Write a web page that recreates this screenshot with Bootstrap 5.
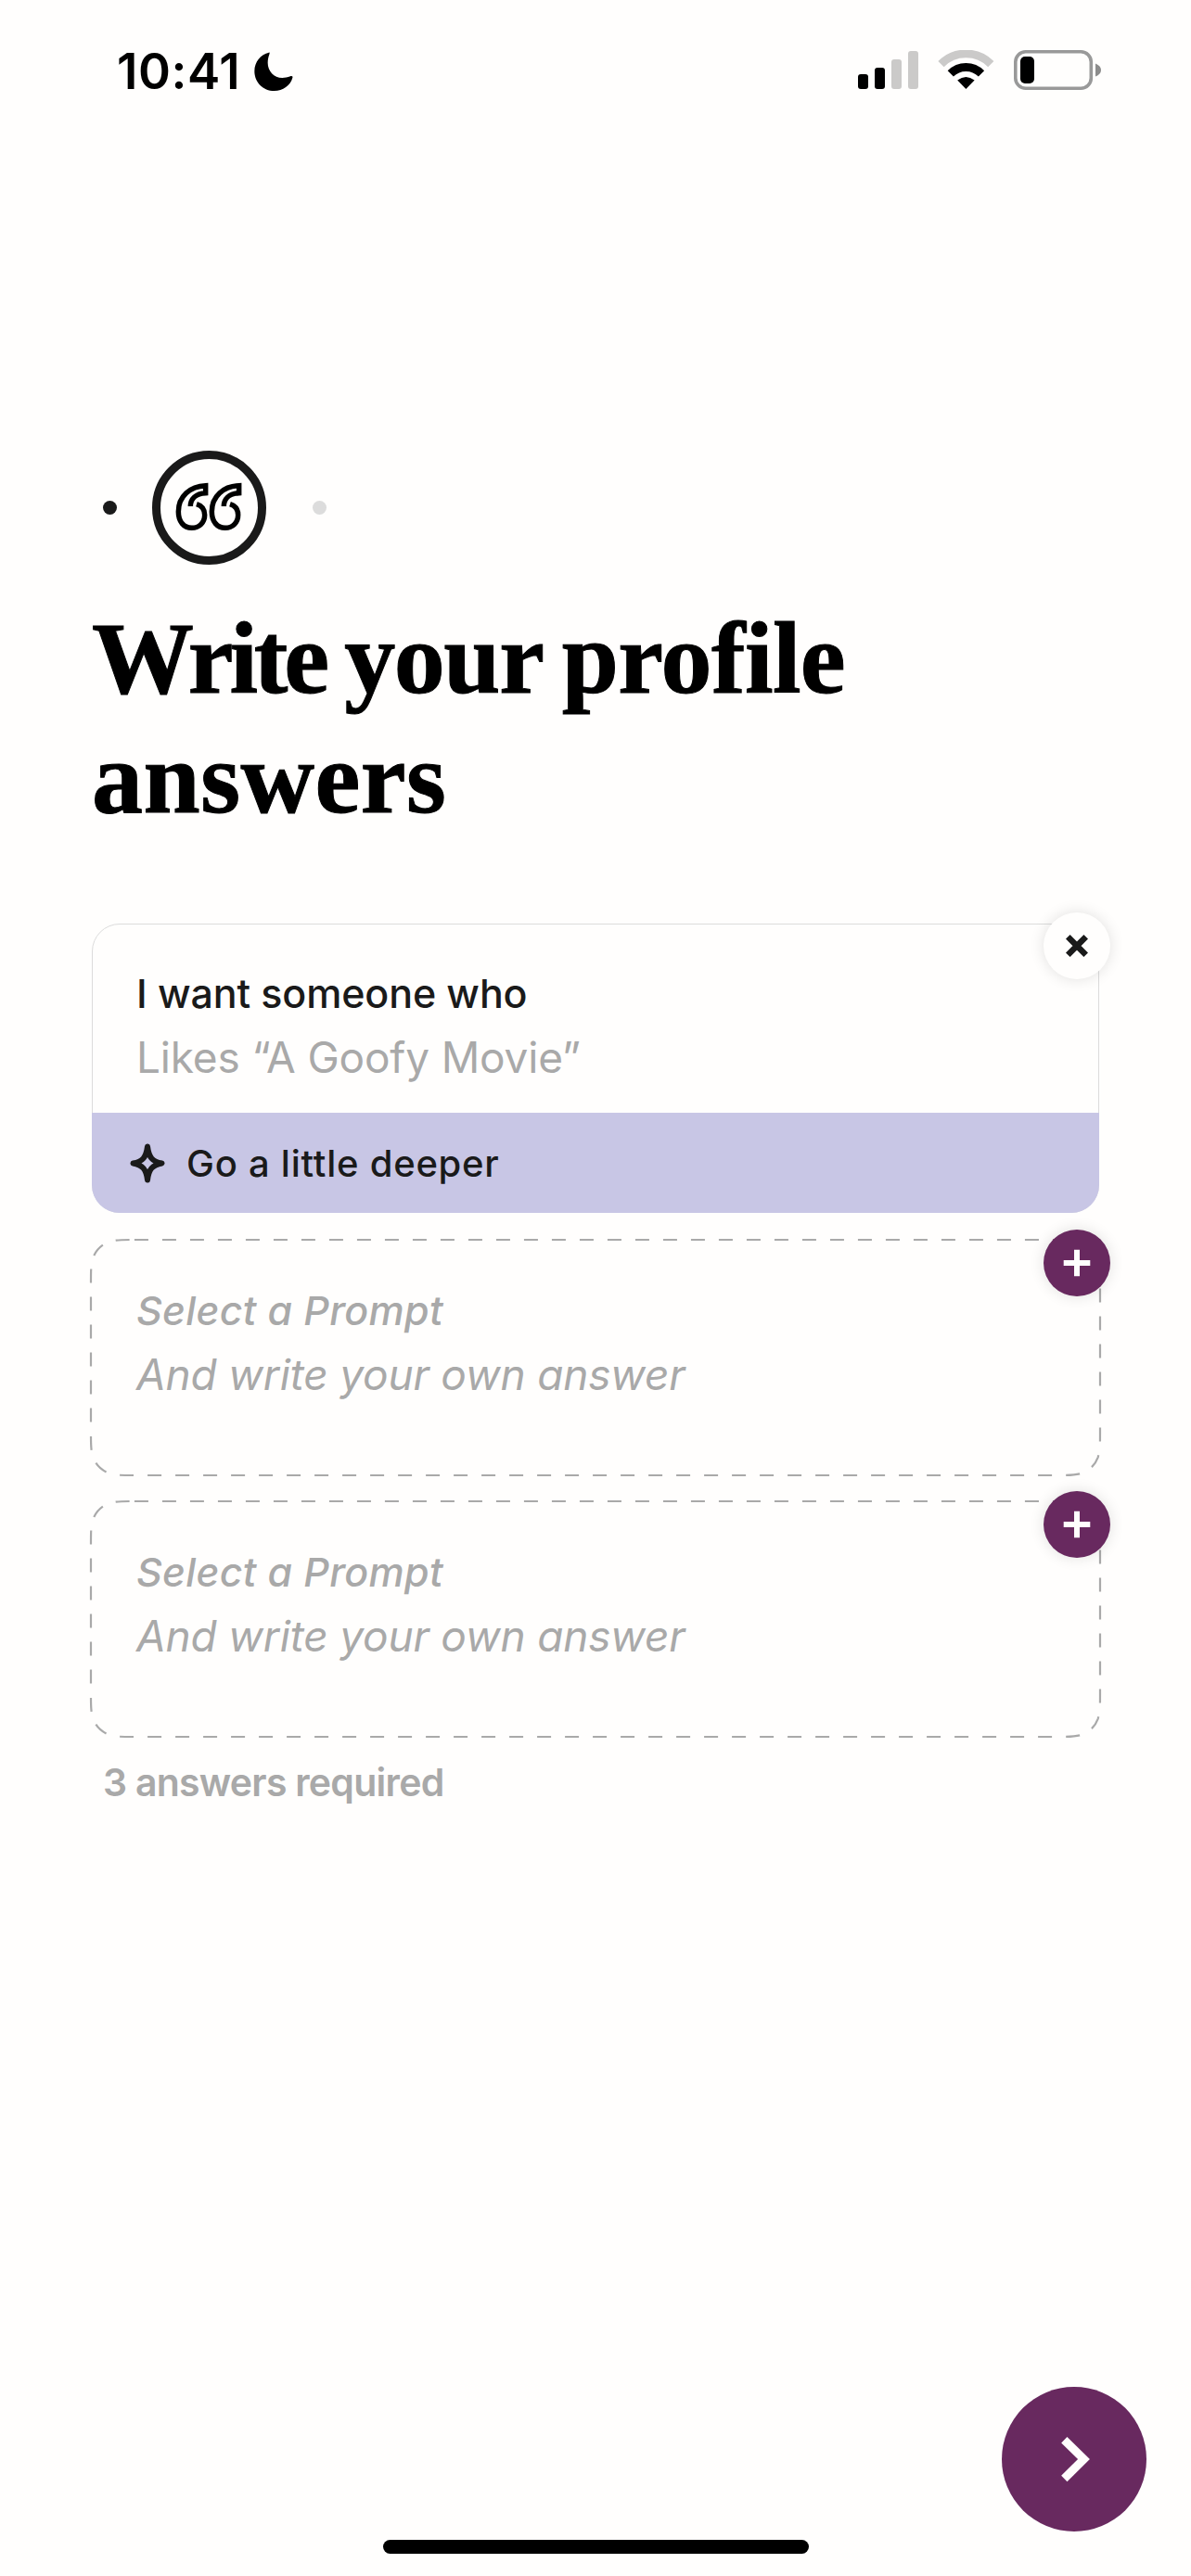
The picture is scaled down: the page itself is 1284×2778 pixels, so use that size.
<!DOCTYPE html>
<html lang="en">
<head>
<meta charset="utf-8">
<meta name="viewport" content="width=device-width, initial-scale=1">
<title>Write your profile answers</title>
<link href="https://cdn.jsdelivr.net/npm/bootstrap@5.3.0/dist/css/bootstrap.min.css" rel="stylesheet">
<style>
  :root { --plum: #68295f; --ink: #1a1a1a; --mute: #a9a9a9; --paper: #fffefd; }
  body { background: var(--paper); color: var(--ink); font-family: Inter, "Liberation Sans", sans-serif; }
  .screen { width: 1284px; height: 2778px; overflow: hidden; }
  svg { display: block; flex: none; }
  .status-bar { height: 150px; padding: 54px 97px 0 126px; color: #000; }
  .clock { font-size: 53px; font-weight: 600; line-height: 46px; letter-spacing: .6px; white-space: nowrap; }
  .moon { margin: 2px 0 0 15px; }
  .steps { margin-top: 336px; height: 123px; padding-left: 12px; }
  .step-icon { margin: 0 50px 0 38px; }
  .dot { width: 15px; height: 15px; border-radius: 50%; background: var(--ink); }
  .dot-off { background: #dcdcdc; }
  .content { padding: 0 99px; }
  .headline { font: 700 110px/129px "Liberation Serif", serif; color: #000; letter-spacing: .5px; -webkit-text-stroke: 1px #000; margin: 37px 0 0 0; white-space: nowrap; }
  .h-a { letter-spacing: -4.2px; word-spacing: -3px; }
  .h-b { letter-spacing: -1.4px; word-spacing: -4px; }
  .h-c { letter-spacing: -.6px; }
  .prompt { height: 312px; border: 1px solid #dcdcdc; border-radius: 30px; background: transparent; margin-top: 92px; }
  .prompt-body { height: 203px; padding: 40px 0 0 47px; }
  .prompt-foot { height: 108px; margin: 0 -1px -1px; padding: 0 0 0 41px; background: #c8c6e5; border-radius: 0 0 30px 30px; }
  .q { font-size: 43px; line-height: 69px; font-weight: 500; letter-spacing: -.13px; white-space: nowrap; }
  .a { font-size: 46px; line-height: 69px; font-weight: 400; color: var(--mute); letter-spacing: -.17px; white-space: nowrap; }
  .foot-text { font-size: 40px; font-weight: 500; letter-spacing: .75px; line-height: 110px; padding-top: 1px; margin-left: 23px; white-space: nowrap; }
  .slot { height: 254px; padding: 42px 0 0 48px; color: var(--mute); font-style: italic; font-feature-settings: "cv11"; }
  .slot .q { letter-spacing: .3px; }
  .slot .a { letter-spacing: -.18px; }
  .slot-1 { margin-top: 29px; }
  .slot-2 { margin-top: 28px; }
  .slot-edge { position: absolute; left: -3px; top: -2px; }
  .corner-btn { position: absolute; right: -12px; width: 72px; height: 72px; border: 0; border-radius: 50%; padding: 0; box-shadow: 0 0 16px rgba(0,0,0,.12); }
  .c-close { top: -13px; right: -13px; background: var(--paper); }
  .c-add { top: -11px; background: var(--plum); }
  .hint { font-size: 41px; line-height: 60px; font-weight: 600; letter-spacing: -.75px; color: var(--mute); margin: 19px 0 0 12px; white-space: nowrap; }
  .next { width: 156px; height: 156px; border: 0; border-radius: 50%; background: var(--plum); padding: 0; margin: auto 48px 0 auto; }
  .home-bar { width: 459px; height: 15px; border-radius: 8px; background: #000; margin: 9px auto 24px; }
</style>
</head>
<body>
<div class="screen d-flex flex-column">
  <header class="status-bar d-flex align-items-start">
    <span class="clock">10:41</span>
    <svg class="moon" width="42" height="42" viewBox="524 78 126 126"><path d="M572 80C545 85 525 110 525 140C525 176 553 204 589 204C617 204 641 187 648 162C650 157 646 155 641 157C632 160 623 162 615 162C588 162 568 140 568 113C568 103 570 94 573 86C575 81 574 79 571 79Z"/></svg>
    <svg class="ms-auto" width="262" height="44" viewBox="0 0 262 44">
      <rect x="0" y="26" width="11" height="16" rx="3"/><rect x="18" y="19" width="11" height="23" rx="3"/>
      <rect x="36" y="10" width="11" height="32" rx="3" fill="#cbcac9"/><rect x="54" y="1" width="11" height="41" rx="3" fill="#cbcac9"/>
      <g fill="none" stroke-width="8.8"><path stroke="#cbcac9" d="M89.5 15.1A38 38 0 0 1 143.3 15.1"/><path stroke="#000" d="M99.8 25.4A23.4 23.4 0 0 1 133 25.4"/></g>
      <path d="M116.4 42L107.2 32.6Q116.4 25.6 125.6 32.6Z"/>
      <rect x="169.8" y="1.8" width="81.5" height="39.5" rx="11" fill="none" stroke="#999" stroke-width="3.6"/>
      <rect x="175" y="7" width="15" height="29" rx="5"/><path fill="#8c8c8c" d="M256 14.5Q262 17 262 21.500Q262 26 256 28.500Z"/>
    </svg>
  </header>

  <main class="content d-flex flex-column">
    <div class="steps d-flex align-items-center">
      <span class="dot"></span>
      <svg class="step-icon" width="123" height="123" viewBox="222 48 369 369" fill="none">
        <circle cx="406.500" cy="232.500" r="171" stroke="#1a1a1a" stroke-width="27"/>
        <g stroke="#000" stroke-width="16.500"><path id="qm" d="M346 228C346 205 362 187 395 185L395 161C345 163 307 195 307 245C307 278 325 298 350 298C375 298 392 280 392 256C392 238 382 226 366 221"/><use href="#qm" x="108"/></g>
      </svg>
      <span class="dot dot-off"></span>
    </div>
    <h1 class="headline"><span class="h-a">Write </span><span class="h-b">your </span><span class="h-c">profile</span><br>answers</h1>

    <section class="prompt card position-relative">
      <div class="prompt-body">
        <div class="q">I want someone who</div>
        <div class="a">Likes “A Goofy Movie”</div>
      </div>
      <div class="prompt-foot d-flex align-items-center">
        <svg width="38" height="43" viewBox="0 0 38 43"><path d="M19 3.500C20.500 15 24 19.500 34.500 21.500C24 23.500 20.500 28 19 39.500C17.500 28 14 23.500 3.500 21.500C14 19.500 17.500 15 19 3.500Z" fill="none" stroke="#1a1a1a" stroke-width="6" stroke-linejoin="round"/></svg>
        <span class="foot-text">Go a little deeper</span>
      </div>
      <button class="corner-btn c-close" aria-label="Remove"><svg width="72" height="72" viewBox="0 0 72 72"><path d="M26.300 26.300L45.700 45.700M45.700 26.300L26.300 45.700" stroke="#1a1a1a" stroke-width="6.500"/></svg></button>
    </section>

    <section class="slot slot-1 position-relative">
      <svg class="slot-edge" width="1092" height="258" viewBox="-2 -2 1092 258"><path id="edge" fill="none" stroke="#a9a9a9" stroke-width="2.200" stroke-dasharray="15 15" d="M46.930 0L1041.070 0C1054.580 0 1061.340 0 1067.430 2.010L1068.610 2.300C1076.550 5.190 1082.810 11.450 1085.700 19.390C1088 26.660 1088 33.420 1088 46.930L1088 207.070C1088 220.580 1088 227.340 1085.990 233.430L1085.700 234.610C1082.810 242.550 1076.550 248.810 1068.610 251.700C1061.340 254 1054.580 254 1041.070 254L46.930 254C33.420 254 26.660 254 20.570 251.990L19.390 251.700C11.450 248.810 5.190 242.550 2.300 234.610C0 227.340 0 220.580 0 207.070L0 46.930C0 33.420 0 26.660 2.010 20.570L2.300 19.390C5.190 11.450 11.450 5.190 19.390 2.300C26.660 0 33.420 0 46.930 0Z"/></svg>
      <div class="q">Select a Prompt</div>
      <div class="a">And write your own answer</div>
      <button class="corner-btn c-add" aria-label="Add"><svg width="72" height="72" viewBox="0 0 72 72"><path d="M21.700 36H50.300M36 21.700V50.300" stroke="#fffefd" stroke-width="6"/></svg></button>
    </section>

    <section class="slot slot-2 position-relative">
      <svg class="slot-edge" width="1092" height="258" viewBox="-2 -2 1092 258"><use href="#edge"/></svg>
      <div class="q">Select a Prompt</div>
      <div class="a">And write your own answer</div>
      <button class="corner-btn c-add" aria-label="Add"><svg width="72" height="72" viewBox="0 0 72 72"><path d="M21.700 36H50.300M36 21.700V50.300" stroke="#fffefd" stroke-width="6"/></svg></button>
    </section>
    <p class="hint">3 answers required</p>
  </main>

  <button class="next" aria-label="Next"><svg width="156" height="156" viewBox="0 0 156 156"><path d="M67.300 57.300L88.500 78L67.300 99" fill="none" stroke="#fffefd" stroke-width="9"/></svg></button>
  <div class="home-bar"></div>
</div>
<script src="https://cdn.jsdelivr.net/npm/bootstrap@5.3.0/dist/js/bootstrap.bundle.min.js"></script>
</body>
</html>
